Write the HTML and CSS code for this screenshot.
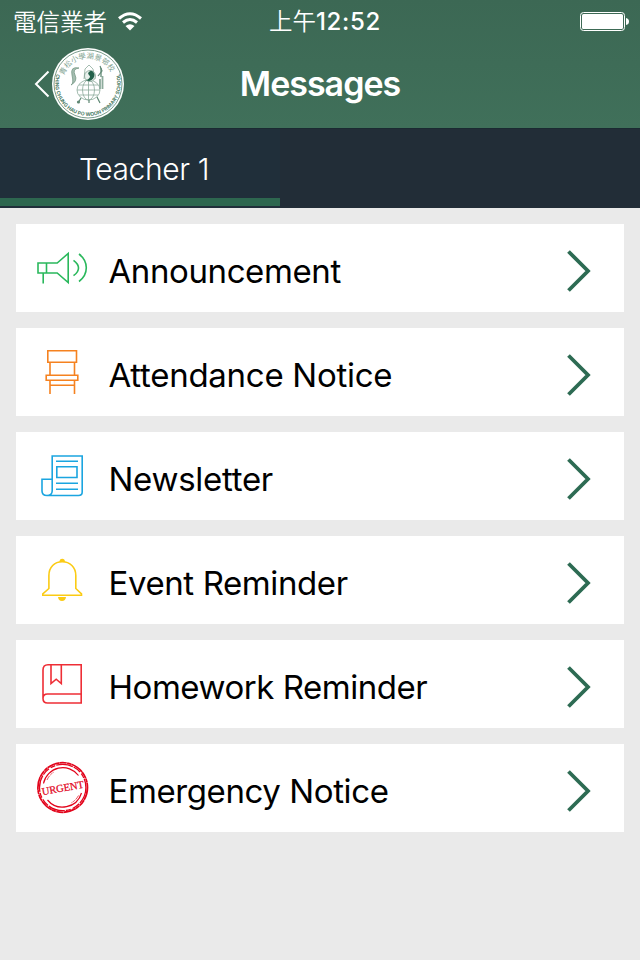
FILE: index.html
```html
<!DOCTYPE html>
<html lang="en">
<head>
  <meta charset="UTF-8">
  <meta name="viewport" content="width=device-width, initial-scale=1.0">
  <title>Messages</title>
  <link rel="stylesheet" href="styles.css">
</head>
<body>
  <header class="header">
    <div class="status-bar">
      <div class="carrier">
        <span>電信業者</span>
        <svg class="wifi" width="24" height="19" viewBox="0 0 24 19" fill="none" stroke="#fff" stroke-width="3">
          <path d="M1 6.5Q12 -3 23 6.5"/>
          <path d="M5 10.5Q12 4.5 19 10.5"/>
          <path d="M12 18.5L7.5 14Q12 10.5 16.5 14Z" fill="#fff" stroke="none"/>
        </svg>
      </div>
      <span class="time"><span class="time-cjk">上午</span>12:52</span>
      <svg class="battery" width="50" height="20" viewBox="0 0 50 20">
        <rect x="0.5" y="1.5" width="44" height="18" rx="3" fill="none" stroke="#fff"/>
        <rect x="2" y="3" width="41" height="15" rx="1.5" fill="#fff"/>
        <path d="M46 7Q49 7.5 49 10.5T46 14Z" fill="#fff"/>
      </svg>
    </div>
    <div class="nav-bar">
      <button class="back-button">
        <svg width="16" height="28" viewBox="0 0 16 28" fill="none" stroke="#fff" stroke-width="2">
          <path d="M14.5 1.5L2 14L14.5 26.5"/>
        </svg>
        <svg class="logo" width="72" height="72" viewBox="0 0 72 72">
          <defs>
            <path id="ring-top" d="M12 27.5A25.4 25.4 0 0 1 60 27.5"/>
            <path id="ring-bottom" d="M4.5 26A32.8 32.8 0 1 0 67.5 26"/>
          </defs>
          <circle cx="36" cy="36" r="36" fill="#fff"/>
          <circle cx="36" cy="36" r="34" fill="none" stroke="#6c9280" stroke-width="0.9"/>
          <text class="logo-cjk"><textPath href="#ring-top">青松小學湖景邨校</textPath></text>
          <text class="logo-latin"><textPath href="#ring-bottom">CHING CHUNG HAU PO WOON PRIMARY SCHOOL</textPath></text>
          <!-- globe -->
          <g fill="none" stroke="#8dab9c" stroke-width="0.8">
            <ellipse cx="36.5" cy="42" rx="11.5" ry="10"/>
            <ellipse cx="36.5" cy="42" rx="6" ry="10"/>
            <path d="M36.5 32V52M25 42H48M27 37H46M27 47H46"/>
            <path d="M32 31L33 21L37 17L41 21L43 31"/>
          </g>
          <!-- yin yang -->
          <circle cx="38" cy="28" r="5.5" fill="#e8f0ec" stroke="#5f8874" stroke-width="0.6"/>
          <path d="M34 32Q38 31 38 28A2.7 2.7 0 0 1 40.5 23.2A5.5 5.5 0 0 1 34 32Z" fill="#23614a"/>
          <circle cx="37.3" cy="25.3" r="1" fill="#23614a"/>
          <path d="M27 20Q18 18 20 27T19 37Q26 33 23 27T27 20Z" fill="#a5bdb1" stroke="#769985" stroke-width="0.8"/>
          <path d="M49 20V29M50.5 28V41M48 31V41" fill="none" stroke="#8dab9c" stroke-width="1.8"/>
          <path d="M48 18L50 23L46 28M29 50L26 55M45 49L48 55M37 52V55" fill="none" stroke="#5f8874" stroke-width="1.2"/>
          <circle cx="26.5" cy="54" r="1.6" fill="#5f8874"/>
        </svg>
      </button>
      <h1>Messages</h1>
    </div>
  </header>

  <nav class="tabs">
    <button class="tab active">Teacher 1</button>
  </nav>

  <main class="message-list">
    <a class="message-item">
      <svg class="icon" viewBox="32 0 60 88" stroke="#2ab85c">
        <path d="M38 39H57.2L68.2 29.5V58.5L57.2 49H38ZM46.5 39V49M43.2 49V59.5"/>
        <path d="M73.5 36.3Q78.5 39.8 78.5 44T73.5 51.7M79 30Q86.3 35.6 86.3 43.8T79 57.5"/>
      </svg>
      <span class="label announcement">Announcement</span>
      <svg class="chevron" viewBox="0 0 28 46"><path d="M3.5 3.5L23 23L3.5 42.5"/></svg>
    </a>
    <a class="message-item">
      <svg class="icon" viewBox="32 0 60 88" stroke="#f58220">
        <path d="M47.8 22.7H76.5V34.2H47.8ZM50 34.2V47.2M74.5 34.2V47.2M46.2 47.2H77.8V52.3H46.2ZM50 52.3V66M74.5 52.3V66M50 57.2H74.5"/>
      </svg>
      <span class="label attendance">Attendance Notice</span>
      <svg class="chevron" viewBox="0 0 28 46"><path d="M3.5 3.5L23 23L3.5 42.5"/></svg>
    </a>
    <a class="message-item">
      <svg class="icon" viewBox="32 0 60 88" stroke="#1ba5e0">
        <path d="M52.2 59V24H82.2V60Q82.2 63.5 78.5 63.5H47Q42 63.5 42 59V47.2H52.2M52.2 59Q52 63.5 47 63.5"/>
        <path d="M56 29.2H78M56 51.3H78M56 57.3H78M56.8 34.7H77V45.5H56.8Z"/>
      </svg>
      <span class="label newsletter">Newsletter</span>
      <svg class="chevron" viewBox="0 0 28 46"><path d="M3.5 3.5L23 23L3.5 42.5"/></svg>
    </a>
    <a class="message-item">
      <svg class="icon" viewBox="32 0 60 88" stroke="#fbcb14">
        <path d="M42.8 59.2V57.8L48.9 52.5V39.5C48.9 31 54.5 25.8 62.2 25.8S75.8 31 75.8 39.5V52.5L81.5 57.8V59.2Z"/>
        <path d="M59.5 26Q59.5 22.7 62.2 22.7T65 26ZM58 61H66Q65.5 65 62 65T58 61Z" fill="#fbcb14" stroke="none"/>
      </svg>
      <span class="label event">Event Reminder</span>
      <svg class="chevron" viewBox="0 0 28 46"><path d="M3.5 3.5L23 23L3.5 42.5"/></svg>
    </a>
    <a class="message-item">
      <svg class="icon" viewBox="32 0 60 88" stroke="#ee2e36">
        <path d="M81.2 24.8H48Q43 24.8 43 30V58.5Q43 63 47.5 63H81.2ZM81.2 54H47.5Q43 54 43 58.5"/>
        <path d="M51 24.8V43.5L56.2 39.2L61.3 43.5V24.8"/>
      </svg>
      <span class="label homework">Homework Reminder</span>
      <svg class="chevron" viewBox="0 0 28 46"><path d="M3.5 3.5L23 23L3.5 42.5"/></svg>
    </a>
    <a class="message-item">
      <svg class="icon" viewBox="32 0 60 88" stroke="#e2041b">
        <circle cx="62.7" cy="43.5" r="24.8" stroke-width="1.7" stroke-dasharray="13 0.3 7 0.4 4 0.3"/>
        <circle cx="62.7" cy="43.5" r="23.2" stroke-width="1.3" stroke-dasharray="17 1 8 2 5 1"/>
        <path d="M43.5 39.5A19.7 19.7 0 0 1 78.5 31.5M81.5 49A19.7 19.7 0 0 1 47.5 56" stroke-width="1.2"/>
        <path d="M47 36A17.5 17.5 0 0 1 54 28M78.5 51.5A17.5 17.5 0 0 1 71 59" stroke-width="0.7" stroke-dasharray="5 1 3 1"/>
        <text class="stamp" x="62.7" y="47.5" transform="rotate(-10 62.7 43.5)">URGENT</text>
      </svg>
      <span class="label emergency">Emergency Notice</span>
      <svg class="chevron" viewBox="0 0 28 46"><path d="M3.5 3.5L23 23L3.5 42.5"/></svg>
    </a>
  </main>
</body>
</html>
```
FILE: styles.css
```css
* {
  margin: 0;
  padding: 0;
  box-sizing: border-box;
}

body {
  font-family: Inter, "Noto Sans CJK TC", sans-serif;
  background: #eaeaea;
  min-height: 100vh;
}

button {
  background: none;
  border: none;
  font-family: inherit;
}

.header {
  height: 128px;
  background: linear-gradient(#3c6854, #40705a);
  color: white;
}

.status-bar {
  display: grid;
  grid-template-columns: 1fr auto 1fr;
  align-items: center;
  height: 40px;
  padding: 0 10px 0 13px;
}

.carrier {
  display: flex;
  align-items: center;
  gap: 11px;
  font-family: "Noto Sans CJK TC", sans-serif;
  font-size: 23.5px;
  font-weight: 350;
  line-height: 40px;
}

.time {
  padding-left: 7px;
  font-size: 24px;
  font-weight: 500;
  letter-spacing: 0.7px;
  line-height: 40px;
}

.time-cjk {
  font-family: "Noto Sans CJK TC", sans-serif;
  font-size: 23.5px;
  font-weight: 350;
  letter-spacing: 0;
}

.battery {
  justify-self: end;
}

.nav-bar {
  display: grid;
  grid-template-columns: 1fr auto 1fr;
  align-items: center;
  height: 88px;
  padding-left: 34px;
}

.back-button {
  display: flex;
  align-items: center;
  gap: 2px;
  cursor: pointer;
}

.logo-cjk {
  font-family: "Noto Sans CJK TC", sans-serif;
  font-size: 7.4px;
  fill: #7e9f8f;
}

.logo-latin {
  font-size: 5px;
  font-weight: 700;
  fill: #4e7d67;
}

h1 {
  margin-right: 34px;
  font-size: 34px;
  font-weight: 600;
  letter-spacing: -1px;
  line-height: 40px;
}

.tabs {
  display: flex;
  height: 80px;
  background: #222d37;
  border-top: 1px solid #1b2a32;
}

.tab {
  width: 280px;
  height: 79px;
  padding: 2px 0 0 8px;
  background: #202f3a;
  border-bottom: 2px solid #202f3a;
  color: white;
  font-size: 30px;
  font-weight: 350;
  letter-spacing: -0.4px;
  cursor: pointer;
}

.tab.active {
  box-shadow: inset 0 -8px #2d674f;
}

.message-list {
  display: flex;
  flex-direction: column;
  gap: 16px;
  padding: 16px;
}

.message-item {
  display: flex;
  align-items: center;
  height: 88px;
  padding: 0 31px 0 16px;
  background: white;
  color: black;
  cursor: pointer;
}

.icon {
  width: 60px;
  height: 88px;
  margin-right: 16.5px;
  fill: none;
  stroke-width: 1.6;
}

.label {
  flex: 1;
  padding-top: 5px;
  font-size: 33px;
  letter-spacing: -0.4px;
  line-height: 40px;
  white-space: nowrap;
}

.attendance,
.newsletter {
  letter-spacing: -0.28px;
}

.homework {
  letter-spacing: -0.46px;
}

.chevron {
  width: 28px;
  height: 46px;
  margin-top: 6px;
  fill: none;
  stroke: #2d6b53;
  stroke-width: 3.8;
}

.stamp {
  font-family: "Liberation Serif", serif;
  font-size: 10.5px;
  text-anchor: middle;
  fill: #e2041b;
  stroke: #e2041b;
  stroke-width: 0.25;
}
```
